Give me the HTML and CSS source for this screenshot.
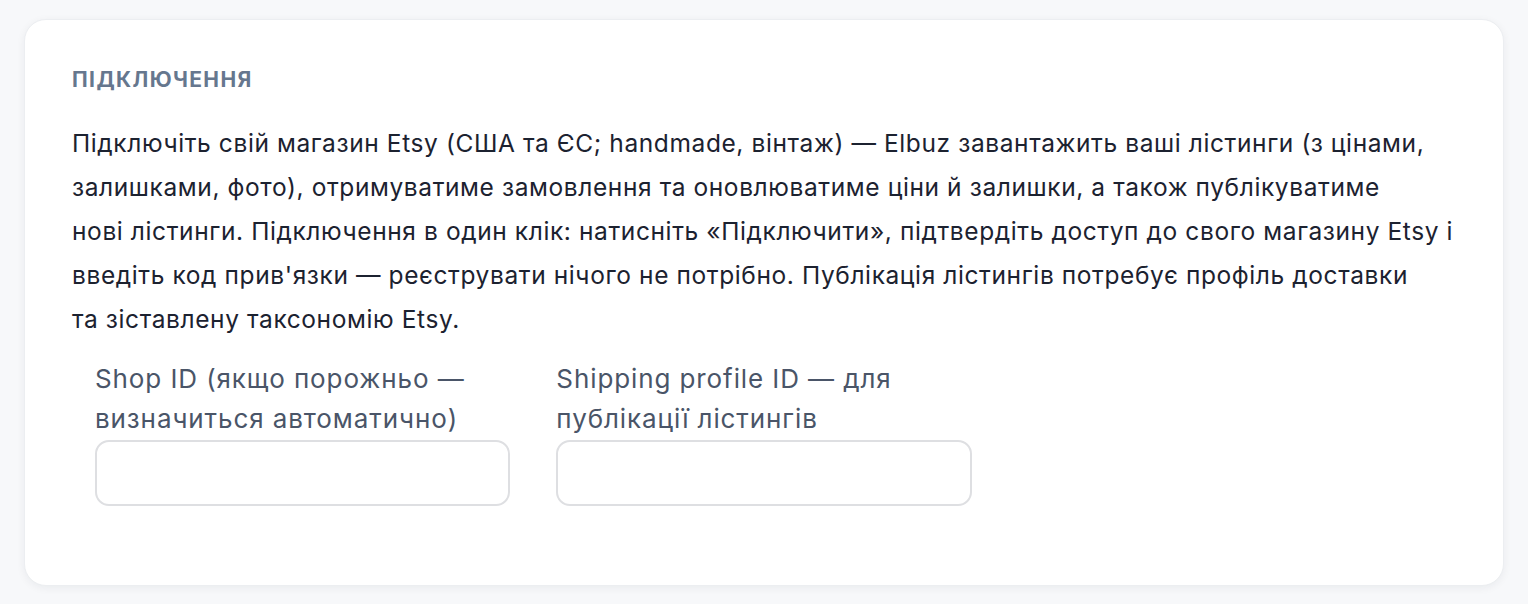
FILE: index.html
```html
<!DOCTYPE html>
<html lang="uk">
<head>
<meta charset="utf-8">
<link rel="stylesheet" href="styles.css">
</head>
<body>
<section class="card">
  <h2 class="card-title">Підключення</h2>
  <p class="card-text">Підключіть свій магазин Etsy (США та ЄС; handmade, вінтаж) — Elbuz завантажить ваші лістинги (з цінами, залишками, фото), отримуватиме замовлення та оновлюватиме ціни й залишки, а також публікуватиме нові&nbsp;лістинги. Підключення в один клік: натисніть «Підключити», підтвердіть доступ до свого магазину Etsy і введіть код прив'язки — реєструвати нічого не потрібно. Публікація лістингів потребує профіль доставки та&nbsp;зіставлену таксономію Etsy.</p>
  <div class="fields">
    <label class="field">
      <span class="field-label">Shop ID (якщо порожньо — визначиться автоматично)</span>
      <input class="field-input" type="text">
    </label>
    <label class="field">
      <span class="field-label">Shipping profile ID — для публікації лістингів</span>
      <input class="field-input" type="text">
    </label>
    <div class="field"></div>
  </div>
</section>
</body>
</html>
```
FILE: styles.css
```css
html, body {
  margin: 0;
  background: #f7f8fa;
}
body {
  padding: 19px 24px 20px;
  font-family: Inter, "Open Sans", sans-serif;
}
.card {
  background: #fff;
  border: 1px solid #eceef1;
  border-radius: 22px;
  box-shadow: 0 2px 8px rgba(20, 30, 50, 0.06);
  padding: 47px 47px 47px;
}
.card-title {
  margin: 0;
  font-size: 21px;
  line-height: 26px;
  font-weight: 700;
  letter-spacing: 1.4px;
  text-transform: uppercase;
  color: #66778e;
}
.card-text {
  margin: 28px 0 0;
  font-size: 24.5px;
  line-height: 44px;
  letter-spacing: 0.6px;
  color: #1c2230;
}
.fields {
  display: grid;
  grid-template-columns: repeat(3, 1fr);
  margin-top: 18px;
}
.field {
  display: flex;
  flex-direction: column;
  padding: 0 23px 32px;
}
.field-label {
  font-size: 26px;
  line-height: 40px;
  letter-spacing: 0.9px;
  color: #4a5568;
}
.field-input {
  margin-top: 1px;
  height: 66px;
  box-sizing: border-box;
  border: 2px solid #dedfe2;
  border-radius: 14px;
  background: #fff;
  font: inherit;
  padding: 0 16px;
}
```
